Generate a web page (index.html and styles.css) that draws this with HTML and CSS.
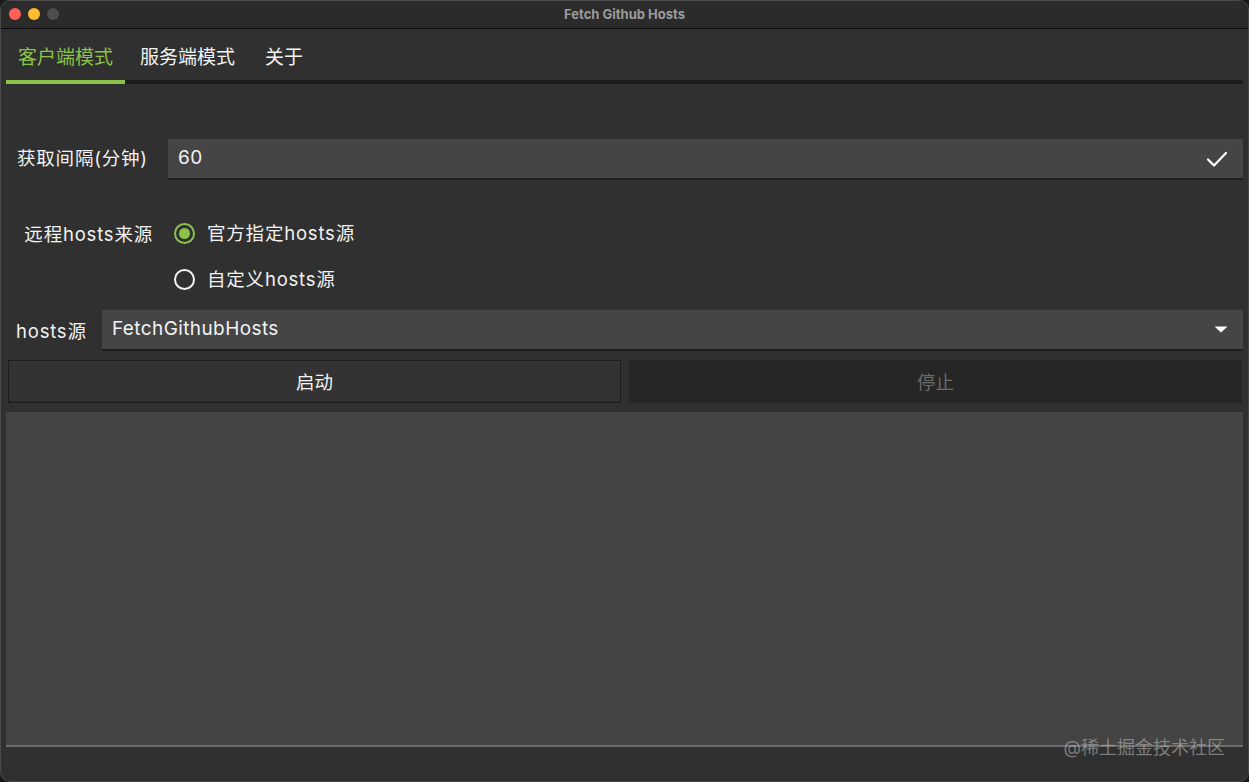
FILE: index.html
```html
<!DOCTYPE html>
<html lang="zh-CN">
<head>
    <meta charset="UTF-8">
    <meta name="viewport" content="width=device-width, initial-scale=1.0">
    <title>Fetch Github Hosts</title>
    <link rel="stylesheet" href="styles.css">
</head>
<body>
    <div class="window">
        <div class="titlebar">
            <div class="lights">
                <span class="light red"></span>
                <span class="light yellow"></span>
                <span class="light grey"></span>
            </div>
            <div class="title">Fetch Github Hosts</div>
        </div>

        <div class="tabs">
            <div class="tab active">客户端模式</div>
            <div class="tab">服务端模式</div>
            <div class="tab">关于</div>
        </div>

        <div class="content">
            <div class="form-row interval">
                <label class="label">获取间隔(分钟)</label>
                <div class="field">
                    <span class="field-text">60</span>
                    <svg class="check" width="22" height="20" viewBox="0 0 22 20">
                        <path d="M2 10.5 L8 16.5 L20 4" fill="none" stroke="#fff" stroke-width="2.2" stroke-linecap="round" stroke-linejoin="round"/>
                    </svg>
                </div>
            </div>

            <div class="radio-group">
                <div class="radio-row">
                    <span class="label right">远程hosts来源</span>
                    <span class="radio checked"></span>
                    <span class="radio-text">官方指定hosts源</span>
                </div>
                <div class="radio-row">
                    <span class="label right"></span>
                    <span class="radio"></span>
                    <span class="radio-text">自定义hosts源</span>
                </div>
            </div>

            <div class="form-row source">
                <label class="label short">hosts源</label>
                <div class="field">
                    <span class="field-text">FetchGithubHosts</span>
                    <svg class="arrow" width="14" height="7" viewBox="0 0 14 7">
                        <path d="M0.5 0.5 L13.5 0.5 L7 6.5 Z" fill="#fff"/>
                    </svg>
                </div>
            </div>

            <div class="buttons">
                <button class="btn">启动</button>
                <button class="btn disabled">停止</button>
            </div>

            <div class="log"></div>
        </div>

        <div class="watermark">@稀土掘金技术社区</div>
    </div>
</body>
</html>
```

FILE: styles.css
```css
* {
    box-sizing: border-box;
}

html, body {
    margin: 0;
    padding: 0;
    background: #1a1a1a;
}

body {
    font-family: "Inter", "Noto Sans CJK SC", sans-serif;
    color: #f2f2f2;
}

.window {
    position: relative;
    width: 1249px;
    height: 782px;
    border-radius: 10px;
    overflow: hidden;
    background: #303030;
    border: 1px solid #4a4a4a;
    display: flex;
    flex-direction: column;
}

.titlebar {
    position: relative;
    height: 28px;
    flex: none;
    background: #2b2b2b;
    border-bottom: 1px solid #0c0c0c;
    display: flex;
    align-items: center;
    justify-content: center;
}

.lights {
    position: absolute;
    left: 8px;
    top: 7px;
    display: flex;
    gap: 7px;
}

.light {
    width: 12px;
    height: 12px;
    border-radius: 50%;
}

.light.red { background: #fe5f57; }
.light.yellow { background: #febc2e; }
.light.grey { background: #4d4d4d; }

.title {
    font-family: "Inter", "Liberation Sans", sans-serif;
    font-size: 13px;
    font-weight: 700;
    color: #9b9b9b;
    margin-top: -2px;
}

.tabs {
    flex: none;
    display: flex;
    gap: 3px;
    margin: 0 5px;
    height: 55px;
    border-bottom: 4px solid #1e1e1e;
}

.tab {
    padding: 15px 12px 0;
    font-size: 19px;
    line-height: 28px;
    color: #f2f2f2;
    margin-bottom: -4px;
    border-bottom: 4px solid transparent;
}

.tab:nth-child(3) {
    margin-left: 3px;
}

.tab.active {
    color: #8bc34a;
    border-bottom-color: #8bc34a;
}

.content {
    flex: 1;
    padding: 55px 5px 0;
    display: flex;
    flex-direction: column;
}

.form-row {
    display: flex;
    align-items: center;
    gap: 3px;
}

.label {
    font-size: 18.5px;
    letter-spacing: 0.8px;
    padding: 0 11px;
    white-space: nowrap;
}

.interval .label {
    width: 159px;
    margin-top: -5px;
}

.label.right {
    width: 159px;
    text-align: right;
    padding-right: 12px;
}

.label.short {
    width: 93px;
    padding: 0 10px;
    margin-top: -2px;
}

.field {
    flex: 1;
    height: 41px;
    background: #454545;
    border-bottom: 2px solid #1f1f1f;
    display: flex;
    align-items: center;
    justify-content: space-between;
    padding: 0 15px 0 10px;
}

.field-text {
    font-size: 19px;
    letter-spacing: 0.4px;
    margin-top: -3px;
}

.radio-group {
    margin-top: 30px;
    display: flex;
    flex-direction: column;
}

.radio-row {
    height: 46px;
    display: flex;
    align-items: center;
}

.radio {
    width: 21px;
    height: 21px;
    border-radius: 50%;
    border: 2.5px solid #f2f2f2;
    margin-left: 9px;
    margin-right: 12px;
    display: flex;
    align-items: center;
    justify-content: center;
}

.radio.checked {
    border-color: #8bc34a;
}

.radio.checked::after {
    content: "";
    width: 11px;
    height: 11px;
    border-radius: 50%;
    background: #8bc34a;
}

.radio-text {
    font-size: 18.5px;
    letter-spacing: 0.8px;
    margin-top: -2px;
}

.source {
    margin-top: 8px;
}

.buttons {
    margin-top: 9px;
    display: grid;
    grid-template-columns: 1fr 1fr;
    gap: 8px;
    padding: 0 1px 0 2px;
}

.btn {
    height: 43px;
    font-family: inherit;
    font-size: 18.5px;
    color: #f2f2f2;
    background: #333333;
    border: 1px solid #1d1d1d;
    box-shadow: inset 0 -1px 0 #2a2a2a;
    padding-bottom: 3px;
}

.btn.disabled {
    background: #262626;
    border-color: #262626;
    color: #6a6a6a;
    box-shadow: none;
}

.log {
    margin-top: 9px;
    height: 335px;
    background: #444444;
    border-bottom: 2px solid #6c6c6c;
}

.watermark {
    position: absolute;
    right: 23px;
    bottom: 22px;
    font-size: 18px;
    color: rgba(190, 190, 190, 0.55);
}
```
